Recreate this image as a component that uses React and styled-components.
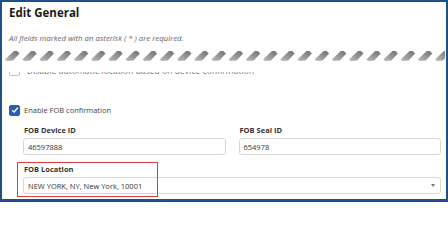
import React from "react";
import styled, { createGlobalStyle } from "styled-components";

const GlobalStyle = createGlobalStyle`
  html, body {
    margin: 0;
    padding: 0;
    background: #ffffff;
  }
  body {
    font-family: "Open Sans", "Noto Sans", sans-serif;
    color: #333;
  }
`;

const Frame = styled.div`
  width: 448px;
  height: 202px;
  box-sizing: border-box;
  border: 2px solid #1f4f8c;
  border-bottom-width: 3px;
  background: #fff;
  display: flex;
  flex-direction: column;
  overflow: hidden;
`;

const Title = styled.h2`
  margin: 0;
  padding-left: 7px;
  height: 21px;
  line-height: 21px;
  font-size: 11.5px;
  font-weight: 700;
  color: #1a1a1a;
`;

const Note = styled.p`
  margin: 10px 0 0;
  padding-left: 7px;
  height: 10px;
  line-height: 10px;
  font-size: 7.8px;
  font-style: italic;
  color: #666;
  span {
    color: #e0303a;
  }
`;

const Tear = styled.svg`
  display: block;
  margin: 6px 0 0 3px;
  width: 440px;
  height: 13px;
`;

/* the row cut by the tear: only the foot of its letters shows */
const CutRow = styled.div`
  margin-top: 10px;
  height: 8px;
  overflow: hidden;
`;

const CutInner = styled.div`
  margin-top: -8px;
  padding-left: 7px;
  display: flex;
  align-items: center;
  gap: 7px;
  font-size: 8.2px;
  letter-spacing: 0.2px;
  color: #777;
  line-height: 13px;
`;

const CheckRow = styled.label`
  margin-top: 24px;
  padding-left: 7px;
  height: 12px;
  display: flex;
  align-items: center;
  gap: 4px;
  font-size: 7.5px;
  color: #444;
`;

const Box = styled.span`
  width: 11px;
  height: 11px;
  flex: none;
  box-sizing: border-box;
  border-radius: 2px;
  display: flex;
  align-items: center;
  justify-content: center;
  background: ${(p) => (p.$checked ? "#2b5fb4" : "#fff")};
  border: 1px solid ${(p) => (p.$checked ? "#2b5fb4" : "#b9c3d3")};
`;

const Fields = styled.div`
  margin-top: 9px;
  padding: 0 5px 0 21px;
  display: grid;
  grid-template-columns: 1fr 1fr;
  column-gap: 13px;
  row-gap: 9px;
`;

const Field = styled.div`
  position: relative;
  grid-column: ${(p) => (p.$wide ? "1 / span 2" : "auto")};
  display: flex;
  flex-direction: column;
  gap: 2px;
`;

const Label = styled.div`
  height: 11px;
  line-height: 11px;
  padding-left: 1px;
  font-size: 7.5px;
  font-weight: 700;
  color: #333;
`;

const Input = styled.div`
  height: 17px;
  box-sizing: border-box;
  border: 1px solid #d8d8d8;
  border-radius: 3px;
  padding: 0 5px 0 4px;
  display: flex;
  align-items: center;
  justify-content: space-between;
  font-size: 7.5px;
  color: #333;
  background: #fff;
`;

const Caret = styled.span`
  width: 0;
  height: 0;
  border-left: 2.5px solid transparent;
  border-right: 2.5px solid transparent;
  border-top: 3px solid #777;
`;

const Highlight = styled.div`
  position: absolute;
  left: -6px;
  top: -2px;
  width: 141px;
  height: 35px;
  box-sizing: border-box;
  border: 1.5px solid #e2393c;
  pointer-events: none;
`;

const TornEdge = () => {
  const teeth = Array.from({ length: 26 }, (_, i) => i * 17.2);
  return (
    <Tear viewBox="0 0 440 13">
      <defs>
        <linearGradient id="tg" x1="0" y1="1" x2="1" y2="0">
          <stop offset="0" stopColor="#bdbdbd" />
          <stop offset="1" stopColor="#6f6f6f" />
        </linearGradient>
        <filter id="soft">
          <feGaussianBlur stdDeviation="0.45" />
        </filter>
      </defs>
      <g filter="url(#soft)">
        {teeth.map((x) => (
          <polygon
            key={x}
            points={`${x},10.5 ${x + 9},2 ${x + 12},2 ${x + 14.5},4.5 ${x + 8},11.5 ${x + 2},12`}
            fill="url(#tg)"
          />
        ))}
      </g>
    </Tear>
  );
};

export default function App() {
  return (
    <>
      <GlobalStyle />
      <Frame>
        <Title>Edit General</Title>
        <Note>
          All fields marked with an asterisk ( <span>*</span> ) are required.
        </Note>
        <TornEdge />
        <CutRow>
          <CutInner>
            <Box />
            Disable automatic location based on device confirmation
          </CutInner>
        </CutRow>
        <CheckRow>
          <Box $checked>
            <svg width="8" height="8" viewBox="0 0 8 8">
              <path d="M1.2 4.2 L3.1 6 L6.8 1.8" fill="none" stroke="#fff" strokeWidth="1.4" />
            </svg>
          </Box>
          Enable FOB confirmation
        </CheckRow>
        <Fields>
          <Field>
            <Label>FOB Device ID</Label>
            <Input>46597888</Input>
          </Field>
          <Field>
            <Label>FOB Seal ID</Label>
            <Input>654978</Input>
          </Field>
          <Field $wide>
            <Label>FOB Location</Label>
            <Input>
              NEW YORK, NY, New York, 10001
              <Caret />
            </Input>
            <Highlight />
          </Field>
        </Fields>
      </Frame>
    </>
  );
}
